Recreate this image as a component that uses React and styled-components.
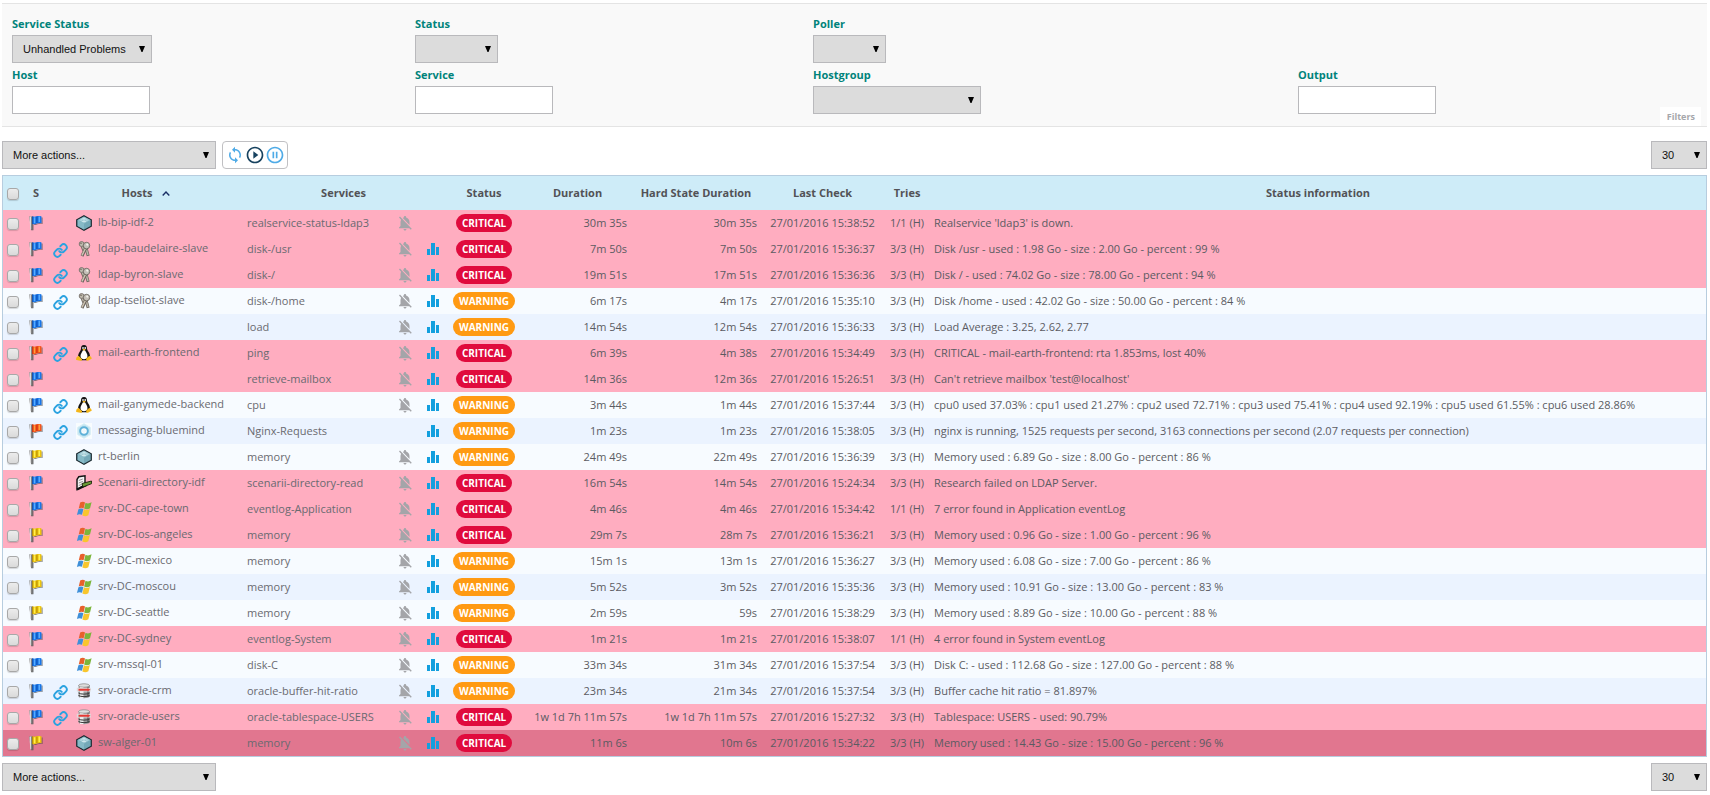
import React from "react";
import styled, { createGlobalStyle, css } from "styled-components";
import { MdNotificationsOff, MdSync, MdPlayCircleOutline, MdPauseCircleOutline } from "react-icons/md";
import { FiLink } from "react-icons/fi";

const GlobalStyle = createGlobalStyle`
  *, *::before, *::after { box-sizing: border-box; }
  body {
    margin: 0;
    background: #fff;
    color: #5b5b62;
    font: 11px/16px "Open Sans", "Noto Sans", sans-serif;
  }
  svg { display: block; }
`;

const Page = styled.main`
  padding: 3px 3px 4px 2px;
`;

/* ---------- Filters ---------- */

const FilterPanel = styled.form`
  position: relative;
  display: grid;
  grid-template-columns: 403fr 398fr 485fr 409fr;
  row-gap: 4px;
  padding: 12px 0 12px 10px;
  background: #f9f9f9;
  border: solid #e4e4e4;
  border-width: 1px 0;
`;

const Field = styled.div`
  grid-column: ${(p) => p.$column};
  display: flex;
  flex-direction: column;
  align-items: flex-start;
  gap: 3px;
`;

const FieldLabel = styled.label`
  color: #00837b;
  font-weight: 700;
`;

const controlFrame = css`
  height: 28px;
  border: 1px solid #b9b9bc;
  border-radius: 0;
  font: 11px "Liberation Sans", Arial, sans-serif;
  color: #111;
`;

const TextInput = styled.input`
  ${controlFrame}
  width: 138px;
  padding: 0 10px;
  background: #fff;
`;

const SelectWrap = styled.span`
  position: relative;
  display: inline-flex;
  width: ${(p) => p.$width}px;
`;

const SelectBox = styled.select`
  ${controlFrame}
  appearance: none;
  width: 100%;
  padding: 0 20px 0 10px;
  background: #dcdcdc;
`;

const SelectArrow = styled.svg`
  position: absolute;
  right: 7px;
  top: 11px;
  pointer-events: none;
`;

const FilterTab = styled.button`
  position: absolute;
  right: 6px;
  bottom: 0;
  height: 19px;
  padding: 0 6px 0 7px;
  border: 0;
  background: #fff;
  color: #a6a7ab;
  font: 700 9px/19px "Open Sans", "Noto Sans", sans-serif;
`;

function Select({ id, width, label, options = [""] }) {
  return (
    <SelectWrap $width={width}>
      <SelectBox id={id} aria-label={label}>
        {options.map((o) => (
          <option key={o}>{o}</option>
        ))}
      </SelectBox>
      <SelectArrow width="6" height="6" viewBox="0 0 6 6" aria-hidden="true">
        <path d="M0 0h6L3.500 6H2.500z" fill="#000" />
      </SelectArrow>
    </SelectWrap>
  );
}

/* ---------- Toolbars ---------- */

const Toolbar = styled.div`
  display: flex;
  gap: 6px;
  margin: ${(p) => (p.$bottom ? "6px 0 0" : "14px 0 6px")};
`;

const ButtonGroup = styled.div`
  display: flex;
  align-items: center;
  justify-content: center;
  width: 66px;
  border: 1px solid #c0c0c3;
  border-radius: 4px;
`;

const IconButton = styled.button`
  display: flex;
  align-items: center;
  justify-content: center;
  width: 20px;
  height: 20px;
  padding: 0;
  border: 0;
  background: none;
  color: ${(p) => (p.$dark ? "#17425f" : "#4fabe7")};
`;

const Spacer = styled.div`
  flex: 1;
`;

/* ---------- Table ---------- */

const TableFrame = styled.div`
  border: 1px solid #b7cddf;
`;

const Table = styled.table`
  width: 100%;
  table-layout: fixed;
  border-collapse: collapse;
  white-space: nowrap;
`;

const HeadRow = styled.tr`
  height: 34px;
  background: #ceecf8;
`;

const HeadCell = styled.th`
  padding: 0;
  color: #525256;
  font-weight: 700;
  text-align: center;
`;

const SortButton = styled.button`
  display: inline-flex;
  align-items: center;
  gap: 10px;
  padding: 0;
  border: 0;
  background: none;
  color: inherit;
  font: inherit;
`;

const toneColors = { critical: "#ffadc0", alert: "#e1768f" };

const Row = styled.tr`
  height: 26px;
  background: ${(p) => toneColors[p.$tone] || "#ebf3ff"};
  &:nth-child(even) {
    background: ${(p) => toneColors[p.$tone] || "#f7fbff"};
  }
`;

const Cell = styled.td`
  padding: 0 4px;
  text-align: ${(p) => p.$align || "left"};
`;

const IconCell = styled.td`
  padding: 0;
  & > svg { margin: 0 auto; }
`;

const LinkCell = styled(IconCell)`
  padding-top: 2px;
`;

const Check = styled.input.attrs({ type: "checkbox" })`
  appearance: none;
  display: block;
  width: 12px;
  height: 12px;
  margin: 2px auto 0;
  border: 1px solid #a8a8a8;
  border-radius: 3px;
  background: linear-gradient(#ececec, #dadada);
  box-shadow: 0 1px 1px rgba(0, 0, 0, 0.15);
`;

const HostLink = styled.a`
  display: flex;
  align-items: center;
  gap: 6px;
  padding-left: 4px;
  color: #6a6a70;
  text-decoration: none;
`;

const HostName = styled.span`
  padding-bottom: 2px;
`;

const ServiceLink = styled.a`
  color: #6a6a70;
  text-decoration: none;
`;

const Badge = styled.span`
  display: inline-block;
  vertical-align: middle;
  height: 18px;
  padding: 0 6px;
  border-radius: 9px;
  background: ${(p) => (p.$status === "CRITICAL" ? "#e00b3d" : "#ff9a13")};
  color: #fff;
  font-size: 10px;
  font-weight: 700;
  line-height: 18px;
`;

/* ---------- Drawn icons ---------- */

const flagColors = {
  blue: ["#1674e8", "#58adff", "#0d4ba8"],
  red: ["#f4511a", "#ffa03c", "#c42d0c"],
  yellow: ["#ecc20c", "#fff04e", "#a98208"],
};

function FlagIcon({ color }) {
  const [base, light, dark] = flagColors[color];
  return (
    <svg width="16" height="16" viewBox="0 0 16 16" aria-label={`${color} flag`}>
      <path d="M6 9.800c3 .8 4-1.800 8.600-.8V2.400h-1.200v5.800C10 7.500 8.500 9.500 6 9z" fill="#444" opacity=".65" />
      <path d="M1.200 1.500h3.600v13.700H3.200z" fill="#5c5c5c" />
      <path d="M1.400 1.700 3.300 1.300v13.200l-1-.6z" fill="#dcdcdc" />
      <path d="M4.800 9v6.400l1-.5V9.500z" fill="#555" opacity=".5" />
      <path d="M4.400 1.300C7.500 2.400 9 .4 13.500 1.400v6.900C9.500 7.400 8 10 4.400 9z" fill={base} />
      <path d="M6.500 2.200v6M11.300 1.400v5.600" stroke={light} strokeWidth="1.500" />
      <path d="M4.700 1.500V9M8.900 1.700v6.300" stroke={dark} strokeWidth=".9" />
    </svg>
  );
}

function HexIcon() {
  return (
    <svg width="16" height="16" viewBox="0 0 16 16" aria-hidden="true">
      <path d="M8 .8 15.300 4.800v6.400L8 15.300.700 11.200V4.800z" fill="#74a9b8" stroke="#1c2b31" strokeWidth="1.200" />
      <path d="M8 1.800 14 5 8 8.600 2 5z" fill="#9fc9d3" />
      <path d="M8 8.600v6l-6-3.500V5z" fill="#86bac7" />
      <path d="M5 5.500c1.500-2.600 4.500-2.600 6 0M8 3.200v3.800M6 6.500h4" stroke="#d3ebf0" strokeWidth=".8" fill="none" />
    </svg>
  );
}

function KeysIcon() {
  return (
    <svg width="16" height="16" viewBox="0 0 16 16" aria-hidden="true">
      <path d="m6 5 1.800 4.500M10 7l2.200 7.800" stroke="#6e675e" strokeWidth="3" />
      <path d="m6 5 1.800 4M10 7l2 7" stroke="#b9b4a8" strokeWidth="1.500" />
      <path d="M9.800 7 6 15" stroke="#655e58" strokeWidth="3" />
      <path d="M9.600 7 6 14.300" stroke="#cdc4b2" strokeWidth="1.500" />
      <ellipse cx="5.600" cy="3" rx="2.400" ry="2.500" fill="#bdb8ac" stroke="#77706a" strokeWidth=".9" />
      <ellipse cx="10.500" cy="4.600" rx="3.200" ry="3.300" fill="#c4c0b8" stroke="#6c665f" strokeWidth=".9" />
      <circle cx="11.300" cy="3.600" r="1.100" fill="#f4f2ec" />
      <circle cx="5" cy="2.300" r=".8" fill="#6e675a" />
    </svg>
  );
}

function TuxIcon() {
  return (
    <svg width="16" height="16" viewBox="0 0 16 16" aria-hidden="true">
      <path d="M8 .1c2.300 0 3.100 1.600 3 3.500 0 2 2.500 3.500 2.900 6.700.3 2.400-1.200 4.700-3.100 5H5.300c-2.100-.3-3.500-2.400-3.200-4.800.4-3 2.900-4.600 2.900-6.700C5 1.700 5.700.100 8 .100z" fill="#121212" />
      <path d="M8 5c1 0 1.400.7 2 2 .9 1.700 1.700 3 1.400 4.700-.3 1.600-1.500 2.500-3.400 2.500s-3.100-.9-3.400-2.500C4.300 10 5.100 8.700 6 7c.6-1.300 1-2 2-2z" fill="#fff" />
      <ellipse cx="7" cy="3.100" rx=".8" ry="1" fill="#fff" />
      <ellipse cx="9.200" cy="3.100" rx=".8" ry="1" fill="#fff" />
      <path d="M6.300 4.500 8 3.700l1.900.8L8 5.700z" fill="#f5b51b" />
      <path d="M2.500 10.800 5.900 14c.5 1.200-.3 2-1.700 1.800L.4 14.900c-.9-.7.100-1.500.2-2.600zM13.200 11l-2.900 2.300c-.4 1.500.2 2.700 1.700 2.400l3.500-2c.8-.7-.4-1.100-.6-2.200z" fill="#f4b619" />
    </svg>
  );
}

function BluemindIcon() {
  return (
    <svg width="16" height="16" viewBox="0 0 16 16" aria-hidden="true">
      <path d="M0 0h16v16H0z" fill="#f8fcfe" />
      <path d="M8 .7 14.300 4.400v7.200L8 15.300l-6.300-3.700V4.400z" fill="#c3e5f1" stroke="#d7eef6" />
      <circle cx="8" cy="8" r="3.800" fill="#fff" stroke="#5fb2d9" strokeWidth="2" />
      <path d="M8 5.800 10 7v2L8 10.200 6 9V7z" fill="#eef8fc" />
    </svg>
  );
}

function ScenarioIcon() {
  return (
    <svg width="16" height="16" viewBox="0 0 16 16" aria-hidden="true">
      <path d="m1 4.500 1.800-2.800L9 .8v8.700L1 14.500z" fill="#f5f5f5" stroke="#111" strokeWidth="1.400" />
      <path d="m2.800 5.500 4-1.500M2.800 8l4-1.600M2.800 10.500l3-1.300" stroke="#888" strokeWidth=".9" />
      <path d="m1 14.500 9.500-4.500" stroke="#111" strokeWidth="2" />
      <path d="m6 8.500 9.500-2.500.2 2.600-8.700 3.400z" fill="#6a9b35" stroke="#172008" strokeWidth=".9" />
    </svg>
  );
}

function WindowsIcon() {
  return (
    <svg width="16" height="16" viewBox="-0.800 1 15.800 15" preserveAspectRatio="none" aria-hidden="true">
      <path d="M3.300 2.500c1.600-1 3.400-1 4.800-.2L6.700 7.900c-1.500-.8-3.200-.7-4.800.2z" fill="#e8602c" />
      <path d="M8.600 2.600c1.700 1 3.700.9 6-.4l-1.500 5.700c-2 1.200-4 1.200-5.900.2z" fill="#7cb53b" />
      <path d="M1.600 8.700c1.500-1 3.300-1 4.900-.2L5.100 14c-1.600-.8-3.400-.7-5 .2z" fill="#3e8fd8" />
      <path d="M7 8.800c1.900 1 3.900.9 5.900-.3L11.400 14.300c-1.900 1.200-3.900 1.200-5.900.2z" fill="#f8c62d" />
    </svg>
  );
}

function DatabaseIcon() {
  return (
    <svg width="16" height="16" viewBox="0 0 16 16" aria-hidden="true">
      <path d="M2.500 2.500C2.500.2 13.500.2 13.500 2.500v11c0 2.300-11 2.300-11 0z" fill="#9c9c9c" />
      <path d="M4 2h3.500v13H4z" fill="#efefef" />
      <path d="M11 2h2.500v12H11z" fill="#6a6a6a" />
      <ellipse cx="8" cy="2.500" rx="5.500" ry="1.700" fill="#dedede" stroke="#858585" strokeWidth=".6" />
      <path d="M2.500 10c2 1.500 9 1.500 11 0M2.500 12.500c2 1.500 9 1.500 11 0" stroke="#3b3b3b" fill="none" />
      <path d="M.8 4.800h14v3.700h-14z" fill="#dcdcdc" />
      <path d="M2.500 5.700h9V5l3 1.700-3 1.800v-.7h-9z" fill="#e33a35" />
    </svg>
  );
}

function GraphIcon() {
  return (
    <svg width="12" height="12" viewBox="0 0 12 12" aria-label="Graph">
      <path d="M0 6h3v6H0zM4 0h4v12H4zM9 4h3v8H9z" fill="#129fde" />
    </svg>
  );
}

function CaretUp() {
  return (
    <svg width="8" height="5" viewBox="0 0 8 5" aria-hidden="true">
      <path d="m.7 4.500 3.300-3.500 3.300 3.500" fill="none" stroke="#1a2f66" strokeWidth="1.400" />
    </svg>
  );
}

const hostIcons = {
  hex: HexIcon,
  keys: KeysIcon,
  tux: TuxIcon,
  bluemind: BluemindIcon,
  scenario: ScenarioIcon,
  windows: WindowsIcon,
  database: DatabaseIcon,
};

/* ---------- Data ---------- */

const columnWidths = [20, 26, 23, 171, 145, 34, 22, 80, 107, 130, 123, 46, null];

// flag, linked, icon, host, service, muted, graph, status, duration, hard duration, check time, tries, output
const services = [
  ["blue", 0, "hex", "lb-bip-idf-2", "realservice-status-ldap3", 1, 0, "CRITICAL", "30m 35s", "30m 35s", "15:38:52", "1/1 (H)", "Realservice 'ldap3' is down."],
  ["blue", 1, "keys", "ldap-baudelaire-slave", "disk-/usr", 1, 1, "CRITICAL", "7m 50s", "7m 50s", "15:36:37", "3/3 (H)", "Disk /usr - used : 1.98 Go - size : 2.00 Go - percent : 99 %"],
  ["blue", 1, "keys", "ldap-byron-slave", "disk-/", 1, 1, "CRITICAL", "19m 51s", "17m 51s", "15:36:36", "3/3 (H)", "Disk / - used : 74.02 Go - size : 78.00 Go - percent : 94 %"],
  ["blue", 1, "keys", "ldap-tseliot-slave", "disk-/home", 1, 1, "WARNING", "6m 17s", "4m 17s", "15:35:10", "3/3 (H)", "Disk /home - used : 42.02 Go - size : 50.00 Go - percent : 84 %"],
  ["blue", 0, null, "", "load", 1, 1, "WARNING", "14m 54s", "12m 54s", "15:36:33", "3/3 (H)", "Load Average : 3.25, 2.62, 2.77"],
  ["red", 1, "tux", "mail-earth-frontend", "ping", 1, 1, "CRITICAL", "6m 39s", "4m 38s", "15:34:49", "3/3 (H)", "CRITICAL - mail-earth-frontend: rta 1.853ms, lost 40%"],
  ["blue", 0, null, "", "retrieve-mailbox", 1, 1, "CRITICAL", "14m 36s", "12m 36s", "15:26:51", "3/3 (H)", "Can't retrieve mailbox 'test@localhost'"],
  ["blue", 1, "tux", "mail-ganymede-backend", "cpu", 1, 1, "WARNING", "3m 44s", "1m 44s", "15:37:44", "3/3 (H)", "cpu0 used 37.03% : cpu1 used 21.27% : cpu2 used 72.71% : cpu3 used 75.41% : cpu4 used 92.19% : cpu5 used 61.55% : cpu6 used 28.86%"],
  ["red", 1, "bluemind", "messaging-bluemind", "Nginx-Requests", 0, 1, "WARNING", "1m 23s", "1m 23s", "15:38:05", "3/3 (H)", "nginx is running, 1525 requests per second, 3163 connections per second (2.07 requests per connection)"],
  ["yellow", 0, "hex", "rt-berlin", "memory", 1, 1, "WARNING", "24m 49s", "22m 49s", "15:36:39", "3/3 (H)", "Memory used : 6.89 Go - size : 8.00 Go - percent : 86 %"],
  ["blue", 0, "scenario", "Scenarii-directory-idf", "scenarii-directory-read", 1, 1, "CRITICAL", "16m 54s", "14m 54s", "15:24:34", "3/3 (H)", "Research failed on LDAP Server."],
  ["blue", 0, "windows", "srv-DC-cape-town", "eventlog-Application", 1, 1, "CRITICAL", "4m 46s", "4m 46s", "15:34:42", "1/1 (H)", "7 error found in Application eventLog"],
  ["yellow", 0, "windows", "srv-DC-los-angeles", "memory", 1, 1, "CRITICAL", "29m 7s", "28m 7s", "15:36:21", "3/3 (H)", "Memory used : 0.96 Go - size : 1.00 Go - percent : 96 %"],
  ["yellow", 0, "windows", "srv-DC-mexico", "memory", 1, 1, "WARNING", "15m 1s", "13m 1s", "15:36:27", "3/3 (H)", "Memory used : 6.08 Go - size : 7.00 Go - percent : 86 %"],
  ["yellow", 0, "windows", "srv-DC-moscou", "memory", 1, 1, "WARNING", "5m 52s", "3m 52s", "15:35:36", "3/3 (H)", "Memory used : 10.91 Go - size : 13.00 Go - percent : 83 %"],
  ["yellow", 0, "windows", "srv-DC-seattle", "memory", 1, 1, "WARNING", "2m 59s", "59s", "15:38:29", "3/3 (H)", "Memory used : 8.89 Go - size : 10.00 Go - percent : 88 %"],
  ["blue", 0, "windows", "srv-DC-sydney", "eventlog-System", 1, 1, "CRITICAL", "1m 21s", "1m 21s", "15:38:07", "1/1 (H)", "4 error found in System eventLog"],
  ["blue", 0, "windows", "srv-mssql-01", "disk-C", 1, 1, "WARNING", "33m 34s", "31m 34s", "15:37:54", "3/3 (H)", "Disk C: - used : 112.68 Go - size : 127.00 Go - percent : 88 %"],
  ["blue", 1, "database", "srv-oracle-crm", "oracle-buffer-hit-ratio", 1, 1, "WARNING", "23m 34s", "21m 34s", "15:37:54", "3/3 (H)", "Buffer cache hit ratio = 81.897%"],
  ["blue", 1, "database", "srv-oracle-users", "oracle-tablespace-USERS", 1, 1, "CRITICAL", "1w 1d 7h 11m 57s", "1w 1d 7h 11m 57s", "15:27:32", "3/3 (H)", "Tablespace: USERS - used: 90.79%"],
  ["yellow", 0, "hex", "sw-alger-01", "memory", 1, 1, "CRITICAL", "11m 6s", "10m 6s", "15:34:22", "3/3 (H)", "Memory used : 14.43 Go - size : 15.00 Go - percent : 96 %", "alert"],
];

function ServiceRow({ data }) {
  const [flag, linked, icon, host, service, muted, graph, status, duration, hard, time, tries, output, tone] = data;
  const HostIcon = hostIcons[icon];
  return (
    <Row $tone={tone || (status === "CRITICAL" ? "critical" : "plain")}>
      <IconCell><Check aria-label={`Select ${service}`} /></IconCell>
      <IconCell><FlagIcon color={flag} /></IconCell>
      <LinkCell>{linked ? <FiLink size={15} color="#2aa2e0" strokeWidth={3} /> : null}</LinkCell>
      <IconCell>
        {host && (
          <HostLink href="#host">
            <HostIcon />
            <HostName>{host}</HostName>
          </HostLink>
        )}
      </IconCell>
      <Cell><ServiceLink href="#service">{service}</ServiceLink></Cell>
      <IconCell>{muted ? <MdNotificationsOff size={18} color="#a4a5a9" /> : null}</IconCell>
      <IconCell>{graph ? <GraphIcon /> : null}</IconCell>
      <Cell $align="center"><Badge $status={status}>{status}</Badge></Cell>
      <Cell $align="right">{duration}</Cell>
      <Cell $align="right">{hard}</Cell>
      <Cell $align="center">27/01/2016 {time}</Cell>
      <Cell $align="center">{tries}</Cell>
      <Cell>{output}</Cell>
    </Row>
  );
}

export default function App() {
  return (
    <>
      <GlobalStyle />
      <Page>
        <FilterPanel onSubmit={(e) => e.preventDefault()}>
          <Field $column={1}>
            <FieldLabel htmlFor="service-status">Service Status</FieldLabel>
            <Select id="service-status" width={140} options={["Unhandled Problems"]} />
          </Field>
          <Field $column={2}>
            <FieldLabel htmlFor="status">Status</FieldLabel>
            <Select id="status" width={83} />
          </Field>
          <Field $column={3}>
            <FieldLabel htmlFor="poller">Poller</FieldLabel>
            <Select id="poller" width={73} />
          </Field>
          <Field $column={1}>
            <FieldLabel htmlFor="host">Host</FieldLabel>
            <TextInput id="host" type="text" />
          </Field>
          <Field $column={2}>
            <FieldLabel htmlFor="service">Service</FieldLabel>
            <TextInput id="service" type="text" />
          </Field>
          <Field $column={3}>
            <FieldLabel htmlFor="hostgroup">Hostgroup</FieldLabel>
            <Select id="hostgroup" width={168} />
          </Field>
          <Field $column={4}>
            <FieldLabel htmlFor="output">Output</FieldLabel>
            <TextInput id="output" type="text" />
          </Field>
          <FilterTab type="button">Filters</FilterTab>
        </FilterPanel>

        <Toolbar>
          <Select width={214} label="Actions" options={["More actions..."]} />
          <ButtonGroup>
            <IconButton type="button" aria-label="Refresh"><MdSync size={18} /></IconButton>
            <IconButton type="button" aria-label="Play" $dark><MdPlayCircleOutline size={20} /></IconButton>
            <IconButton type="button" aria-label="Pause"><MdPauseCircleOutline size={20} /></IconButton>
          </ButtonGroup>
          <Spacer />
          <Select width={56} label="Rows per page" options={["30"]} />
        </Toolbar>

        <TableFrame>
          <Table>
            <colgroup>
              {columnWidths.map((w, i) => (
                <col key={i} width={w || undefined} />
              ))}
            </colgroup>
            <thead>
              <HeadRow>
                <HeadCell><Check aria-label="Select all" /></HeadCell>
                <HeadCell>S</HeadCell>
                <HeadCell colSpan={2}><SortButton type="button">Hosts <CaretUp /></SortButton></HeadCell>
                <HeadCell colSpan={3}>Services</HeadCell>
                <HeadCell>Status</HeadCell>
                <HeadCell>Duration</HeadCell>
                <HeadCell>Hard State Duration</HeadCell>
                <HeadCell>Last Check</HeadCell>
                <HeadCell>Tries</HeadCell>
                <HeadCell>Status information</HeadCell>
              </HeadRow>
            </thead>
            <tbody>
              {services.map((s, i) => (
                <ServiceRow key={i} data={s} />
              ))}
            </tbody>
          </Table>
        </TableFrame>

        <Toolbar $bottom>
          <Select width={214} label="Actions" options={["More actions..."]} />
          <Spacer />
          <Select width={56} label="Rows per page" options={["30"]} />
        </Toolbar>
      </Page>
    </>
  );
}
